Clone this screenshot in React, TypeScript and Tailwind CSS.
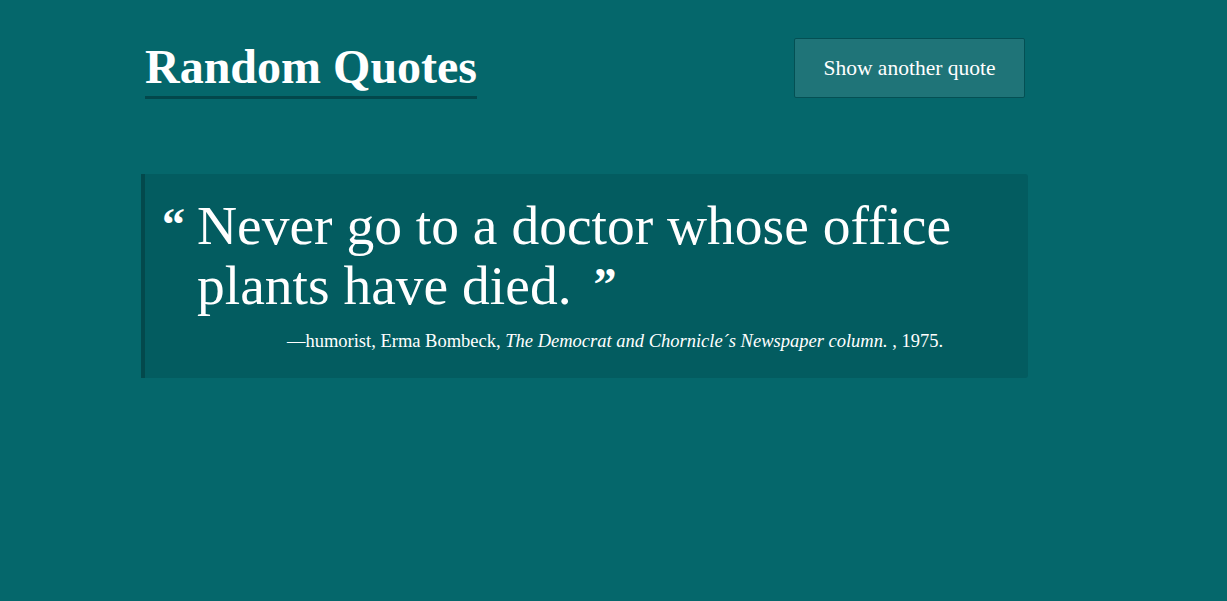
import React from 'react';

const quote = {
  text: 'Never go to a doctor whose office plants have died.',
  role: 'humorist',
  author: 'Erma Bombeck',
  source: 'The Democrat and Chornicle´s Newspaper column.',
  year: '1975',
};

const App = () => {
  return (
    <div className="min-h-[601px] w-full bg-[#05676b] text-white font-['Liberation_Serif',serif]">
      <div className="ml-[141px] w-[887px] pt-[38px]">
        {/* Header */}
        <header className="flex items-start justify-between pl-[4px] pr-[3px]">
          <h1 className="border-b-[3px] border-[#03474b] text-[48px] font-bold leading-[58px]">
            Random Quotes
          </h1>
          <button className="h-[60px] w-[231px] rounded-[2px] border border-[#045054] bg-[#1f7478] text-[21.5px] text-white">
            Show another quote
          </button>
        </header>

        {/* Quote */}
        <blockquote className="mt-[75px] flex rounded-r-[3px] border-l-[4px] border-[#03494c] bg-[#035c60] pb-[25px] pl-[17px] pr-[20px] pt-[22px]">
          <span className="mt-[6px] w-[35px] shrink-0 text-[46px] font-bold leading-[46px]">“</span>
          <div className="flex-1">
            <p className="max-w-[780px] text-[55.5px] leading-[60px]">
              {quote.text}
              <span className="relative top-[-4px] ml-[22px] inline-block text-[46px] font-bold leading-[30px]">”</span>
            </p>
            <p className="mt-[13px] pl-[25px] text-center text-[18.5px] leading-[24px]">
              —{quote.role}, {quote.author}, <cite className="italic">{quote.source}</cite> , {quote.year}.
            </p>
          </div>
        </blockquote>
      </div>
    </div>
  );
};

export default App;
